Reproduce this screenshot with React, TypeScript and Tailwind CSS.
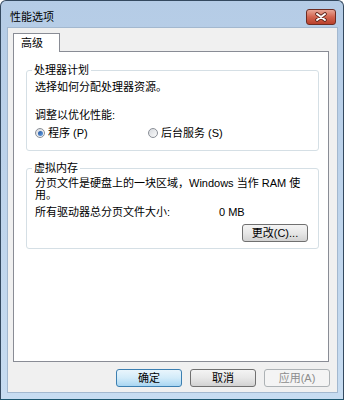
import type { ReactNode } from "react";

function Radio({ checked, label }: { checked?: boolean; label: string }) {
  return (
    <div className="flex items-center">
      <span className="flex h-[10px] w-[10px] items-center justify-center rounded-full border border-[#8a8f97] bg-gradient-to-br from-[#d6d9de] to-[#fbfbfb]">
        {checked && (
          <span className="h-[5px] w-[5px] rounded-full bg-gradient-to-br from-[#1c4f9c] to-[#6fa8e6]" />
        )}
      </span>
      <span className="ml-[3px] leading-[14px]">{label}</span>
    </div>
  );
}

function GroupBox({ title, className, children }: { title: string; className: string; children: ReactNode }) {
  return (
    <div className={`relative rounded-[3px] border border-[#d5dfe5] ${className}`}>
      <span className="absolute -top-[8px] left-[5px] bg-white px-[2px] leading-[14px]">{title}</span>
      {children}
    </div>
  );
}

function Button({ children, variant = "normal" }: { children: ReactNode; variant?: "normal" | "default" | "disabled" }) {
  const styles = {
    normal: "border-[#707070] from-[#f4f4f4] via-[#e7e7e7] to-[#d2d2d2] text-black",
    default: "border-[#3c7fb1] from-[#e9f5fc] via-[#d2ebf9] to-[#a9d6f2] text-black",
    disabled: "border-[#adb2b5] from-[#f4f4f4] via-[#f4f4f4] to-[#f4f4f4] text-[#8d8d8d]",
  }[variant];
  return (
    <button
      className={`flex h-[18px] w-[66px] items-center justify-center rounded-[3px] border bg-gradient-to-b leading-[14px] ${styles}`}
    >
      {children}
    </button>
  );
}

export default function App() {
  return (
    <div className="flex h-[400px] w-[344px] flex-col rounded-t-[6px] border border-[#34495f] border-b-[#1d5770] bg-gradient-to-b from-[#b5cce6] to-[#c7dcf1] font-['Liberation_Sans','Noto_Sans_CJK_SC',sans-serif] text-[11px] text-black">
      {/* Title bar */}
      <div className="flex h-[27px] items-start justify-between">
        <span className="ml-[9px] mt-[9px] leading-[14px]">性能选项</span>
        <button className="mr-[7px] mt-[8px] flex h-[16px] w-[30px] items-center justify-center rounded-[3px] border border-[#6d2c22] bg-gradient-to-b from-[#e7a596] via-[#d2644f] to-[#b9402b]">
          <svg width="14" height="10" viewBox="0 0 14 10">
            <path d="M3 2 L11 8 M11 2 L3 8" stroke="#5a2219" strokeWidth="3.6" strokeLinecap="round" />
            <path d="M3 2 L11 8 M11 2 L3 8" stroke="#ffffff" strokeWidth="2" strokeLinecap="round" />
          </svg>
        </button>
      </div>

      {/* Client area */}
      <div className="ml-[7px] flex h-[364px] w-[329px] flex-col bg-[#f0f0f0] ring-1 ring-[#a3b8cf]">
        <div className="ml-[5px] mt-[5px] flex">
          <div className="relative z-10 -mb-px h-[19px] w-[47px] border-x border-t border-[#898c95] bg-white pl-[7px] pt-[2px] leading-[14px]">
            高级
          </div>
        </div>

        <div className="ml-[5px] h-[311px] w-[316px] border border-[#898c95] bg-white">
          <GroupBox title="处理器计划" className="ml-[12px] mt-[18px] h-[81px] w-[293px]">
            <div className="pl-[8px] pt-[9px]">
              <div className="leading-[14px]">选择如何分配处理器资源。</div>
              <div className="mt-[14px] leading-[14px]">调整以优化性能:</div>
              <div className="mt-[4px] flex">
                <div className="w-[113px]">
                  <Radio checked label="程序 (P)" />
                </div>
                <Radio label="后台服务 (S)" />
              </div>
            </div>
          </GroupBox>

          <GroupBox title="虚拟内存" className="ml-[12px] mt-[17px] h-[81px] w-[293px]">
            <div className="pl-[8px] pt-[8px]">
              <div className="leading-[12px]">
                <div>分页文件是硬盘上的一块区域，Windows 当作 RAM 使</div>
                <div>用。</div>
              </div>
              <div className="mt-[4px] flex leading-[14px]">
                <span className="w-[184px]">所有驱动器总分页文件大小:</span>
                <span>0 MB</span>
              </div>
              <div className="mr-[10px] mt-[5px] flex justify-end">
                <Button>更改(C)...</Button>
              </div>
            </div>
          </GroupBox>
        </div>

        <div className="mr-[7px] mt-[7px] flex justify-end gap-[8px]">
          <Button variant="default">确定</Button>
          <Button>取消</Button>
          <Button variant="disabled">应用(A)</Button>
        </div>
      </div>
    </div>
  );
}
